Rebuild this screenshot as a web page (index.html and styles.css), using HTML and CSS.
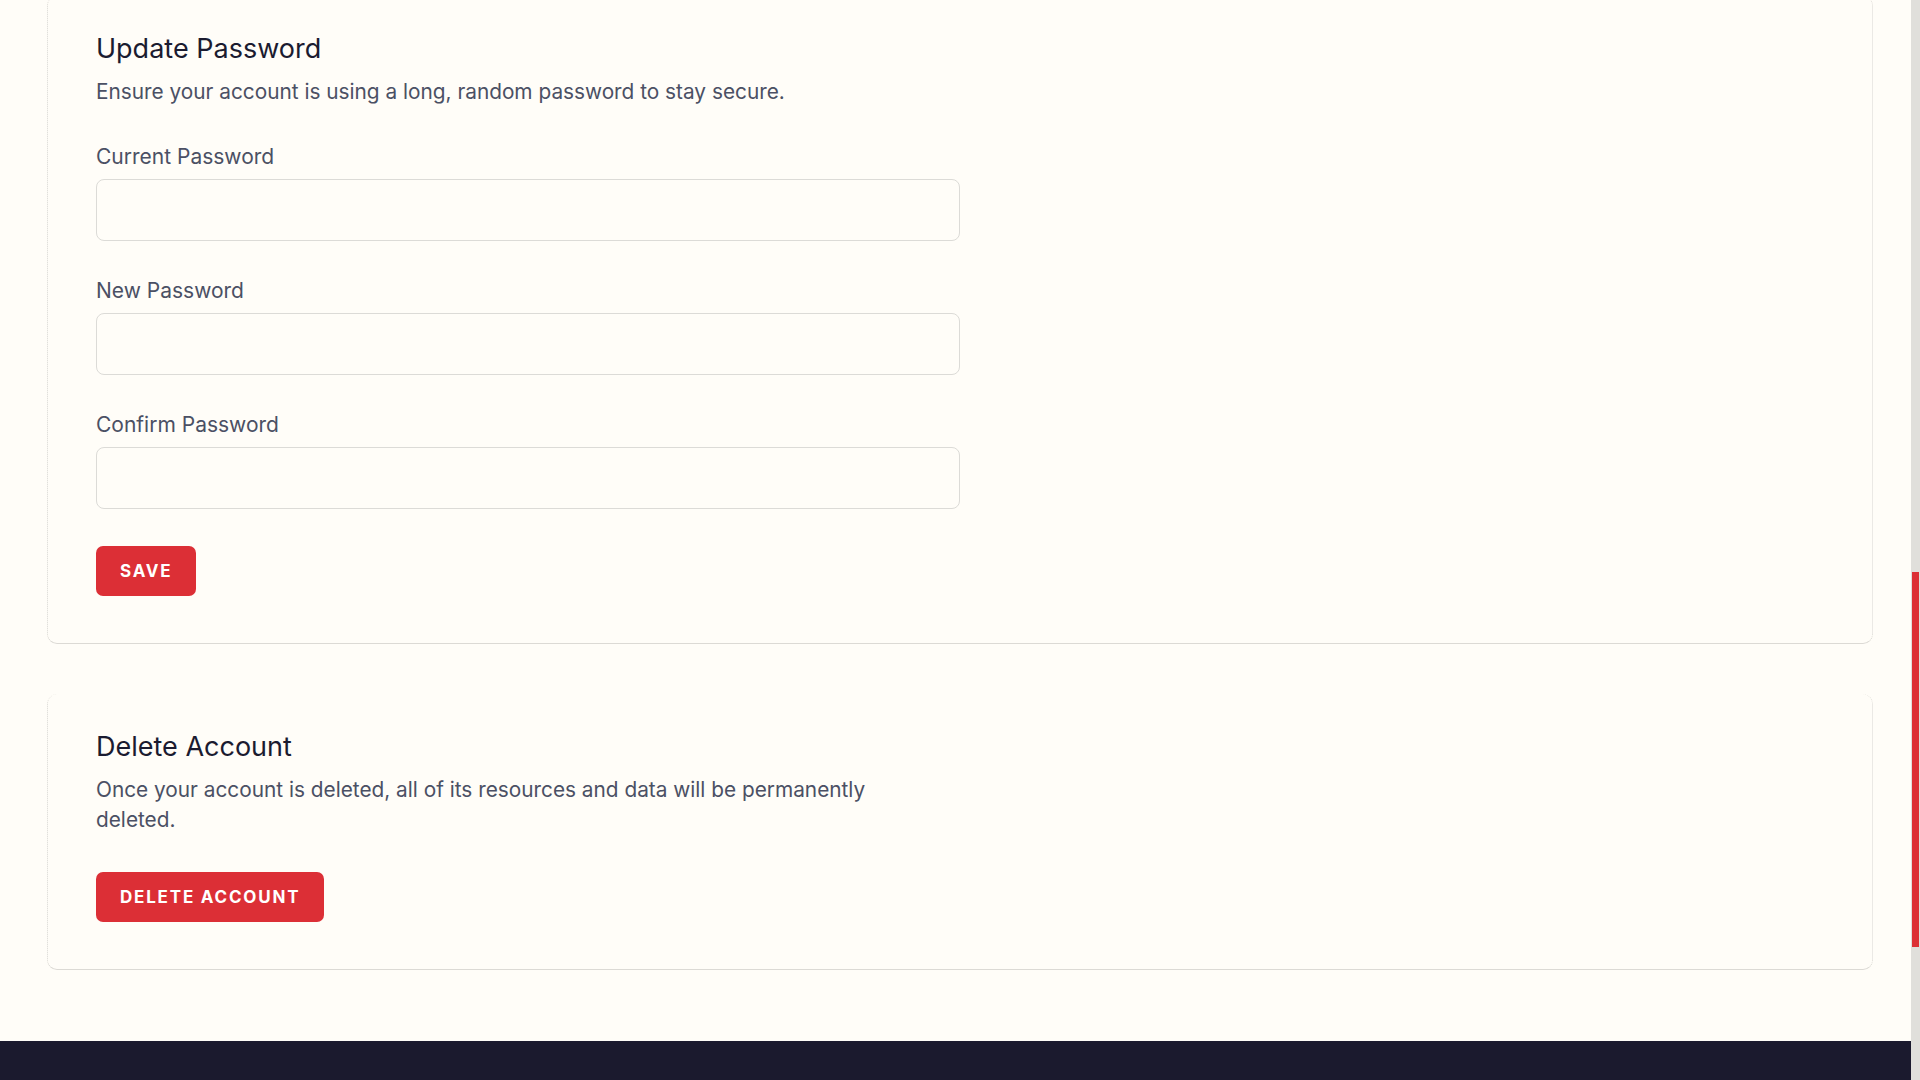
FILE: index.html
```html
<!DOCTYPE html>
<html lang="en">
<head>
    <meta charset="UTF-8">
    <meta name="viewport" content="width=device-width, initial-scale=1.0">
    <title>Profile</title>
    <link rel="stylesheet" href="styles.css">
</head>
<body>
    <div class="page">
        <main class="content">
            <section class="card card-first">
                <h2>Update Password</h2>
                <p class="card-desc">Ensure your account is using a long, random password to stay secure.</p>

                <form class="form">
                    <div class="field">
                        <label for="current_password">Current Password</label>
                        <input id="current_password" type="password">
                    </div>
                    <div class="field">
                        <label for="password">New Password</label>
                        <input id="password" type="password">
                    </div>
                    <div class="field">
                        <label for="password_confirmation">Confirm Password</label>
                        <input id="password_confirmation" type="password">
                    </div>
                    <button type="button" class="btn btn-save">Save</button>
                </form>
            </section>

            <section class="card">
                <h2>Delete Account</h2>
                <p class="card-desc card-desc-narrow">Once your account is deleted, all of its resources and data will be permanently deleted.</p>
                <button type="button" class="btn btn-delete">Delete Account</button>
            </section>
        </main>
        <footer class="footer"></footer>
    </div>
    <div class="scrollbar"><div class="scrollbar-thumb"></div></div>
</body>
</html>
```

FILE: styles.css
```css
html, body {
    margin: 0;
    height: 100%;
    overflow: hidden;
}
body {
    display: flex;
    background-color: #fffdf8;
    font-family: Inter, Lato, sans-serif;
    color: #4b5064;
}
.page {
    flex: 1;
    display: flex;
    flex-direction: column;
    height: 1080px;
}
.content {
    padding: 0 38px 0 47px;
    margin-top: -4px;
}
.card {
    border: 1px dotted #d8d6d1;
    border-top: 0;
    border-bottom: 1px solid #dcdad5;
    border-radius: 10px;
    padding: 37px 48px 47px 48px;
    margin-top: 50px;
}
.card-first {
    margin-top: 0;
}
.card h2 {
    margin: 0;
    font-size: 27px;
    line-height: 32px;
    font-weight: 400;
    color: #1b1b30;
}
.card-desc {
    margin: 12px 0 0;
    font-size: 20.8px;
    line-height: 30px;
}
.card-desc-narrow {
    max-width: 820px;
}
.form {
    margin-top: 34px;
}
.field {
    display: flex;
    flex-direction: column;
    width: 864px;
    margin-bottom: 34px;
}
.field label {
    font-size: 21px;
    line-height: 28px;
    margin: 2px 0 8px;
}
.field input {
    box-sizing: border-box;
    height: 62px;
    border: 1px solid #dcdbd7;
    border-radius: 8px;
    background: transparent;
    padding: 0 16px;
    font: inherit;
}
.form .btn {
    margin-top: 37px;
}
.btn {
    display: block;
    height: 50px;
    padding: 0 24px;
    border: 0;
    border-radius: 7px;
    background-color: #dc2f36;
    color: #fff;
    font-family: Inter, Lato, sans-serif;
    font-size: 17px;
    font-weight: 700;
    letter-spacing: 1.8px;
    text-transform: uppercase;
}
.btn-delete {
    margin-top: 37px;
}
.footer {
    margin-top: auto;
    height: 39px;
    background-color: #1b1a2e;
}
.scrollbar {
    width: 9px;
    height: 1080px;
    background-color: #e0dfdb;
    padding-top: 572px;
    box-sizing: border-box;
}
.scrollbar-thumb {
    width: 7px;
    height: 375px;
    margin-left: 1px;
    background-color: #dc3035;
}
```
